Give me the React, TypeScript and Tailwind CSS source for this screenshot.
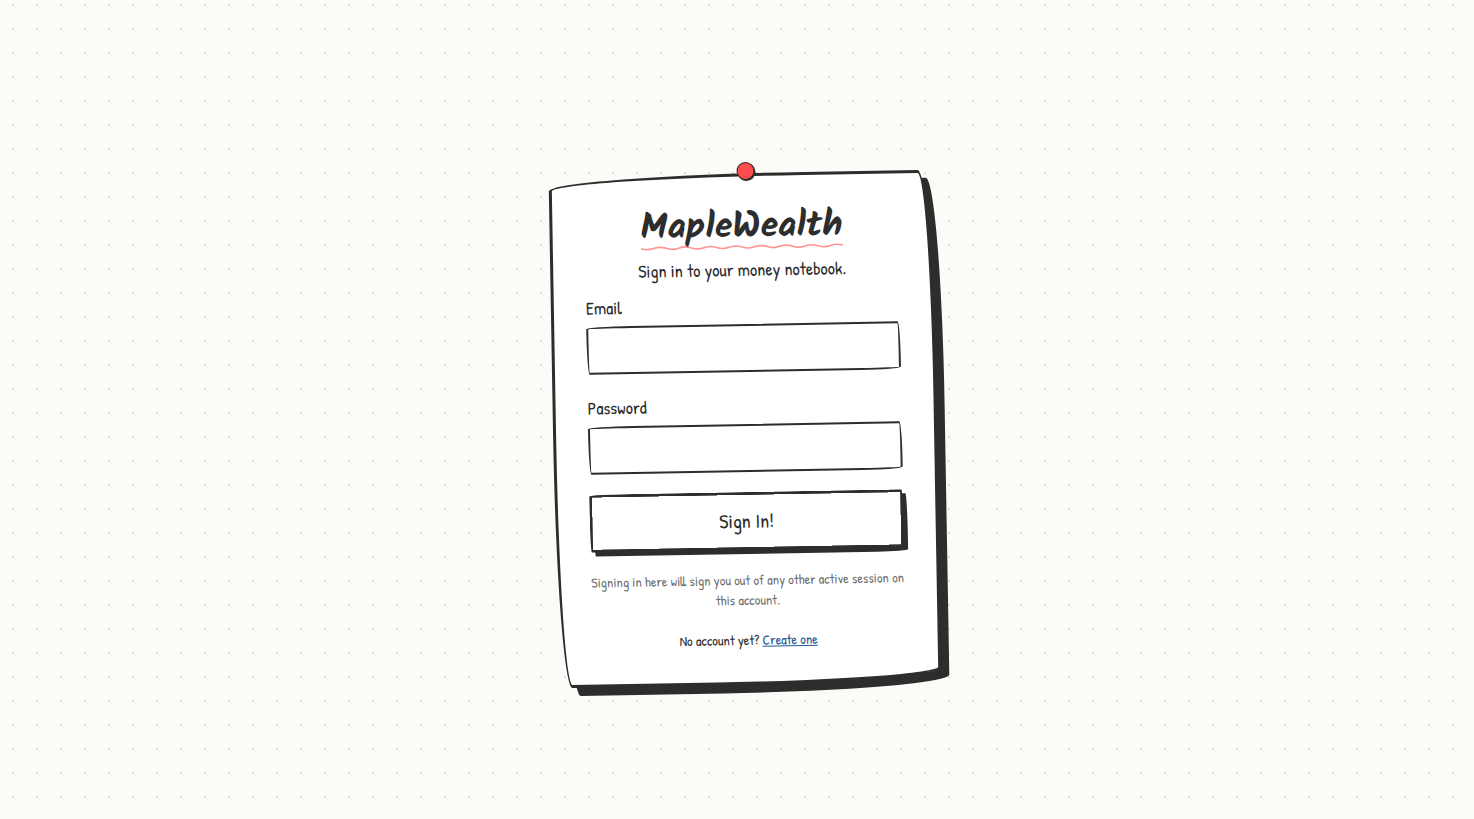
import React from "react";

const ink = "border-[#2d2d2d] bg-white";
const sketch = `rounded-[255px_15px_225px_15px/15px_225px_15px_255px] ${ink}`;

function Field({ id, label, type }: { id: string; label: string; type: string }) {
  return (
    <div className="flex flex-col gap-1.5">
      <label htmlFor={id} className="self-start text-lg leading-6">
        {label}
      </label>
      <input
        id={id}
        name={id}
        type={type}
        className={`h-12 w-full border-2 px-4 text-lg outline-none ${sketch}`}
      />
    </div>
  );
}

function Squiggle() {
  return (
    <svg
      viewBox="0 0 200 6"
      className="-mt-1 h-[6px] w-full"
      preserveAspectRatio="none"
      fill="none"
      stroke="#ff4d4d"
      strokeOpacity="0.6"
      strokeWidth="1.6"
      aria-hidden="true"
    >
      <path d="M0 3 q6.25 2.2 12.5 0 t12.5 0 t12.5 0 t12.5 0 t12.5 0 t12.5 0 t12.5 0 t12.5 0 t12.5 0 t12.5 0 t12.5 0 t12.5 0 t12.5 0 t12.5 0 t12.5 0 t12.5 0" />
    </svg>
  );
}

export default function App() {
  return (
    <main className="flex min-h-screen items-center justify-center bg-[#fdfbf7] bg-[radial-gradient(#dfdfdb_1px,transparent_1px)] bg-[size:24px_24px] bg-[position:1px_-7px] pt-[38px] pl-4 font-['Patrick_Hand','Lato',sans-serif] text-[#2d2d2d]">
      <section
        className={`relative w-full max-w-96 -rotate-1 border-[3px] p-8 shadow-[8px_8px_0_#2d2d2d] ${sketch}`}
      >
        <span className="absolute -top-3.5 left-1/2 -ml-1 size-[18px] rounded-full border border-[#2d2d2d] bg-[#ff4d4d] shadow-[1px_1px_0_#2d2d2d]" />
        <header className="flex flex-col items-center">
          <h1 className="flex flex-col font-['Kalam','Lato',sans-serif] text-4xl leading-10 font-bold">
            MapleWealth
            <Squiggle />
          </h1>
          <p className="mt-2 text-lg leading-6">Sign in to your money notebook.</p>
        </header>
        <form className="mt-3 flex flex-col" onSubmit={(e) => e.preventDefault()}>
          <div className="flex flex-col gap-[22px]">
            <Field id="email" label="Email" type="email" />
            <Field id="password" label="Password" type="password" />
          </div>
          <button
            type="submit"
            className={`mt-5 h-[58px] w-full rounded-[125px_5px_85px_5px/5px_125px_5px_155px] border-[3px] text-xl shadow-[4px_4px_0_#2d2d2d] ${ink}`}
          >
            Sign In!
          </button>
        </form>
        <p className="mt-5 text-center text-sm leading-5 text-[#2d2d2d]/70">
          Signing in here will sign you out of any other active session on this account.
        </p>
        <p className="mt-5 text-center text-sm leading-5">
          No account yet?{" "}
          <a href="#create" className="text-[#225a98] underline">
            Create one
          </a>
        </p>
      </section>
    </main>
  );
}
